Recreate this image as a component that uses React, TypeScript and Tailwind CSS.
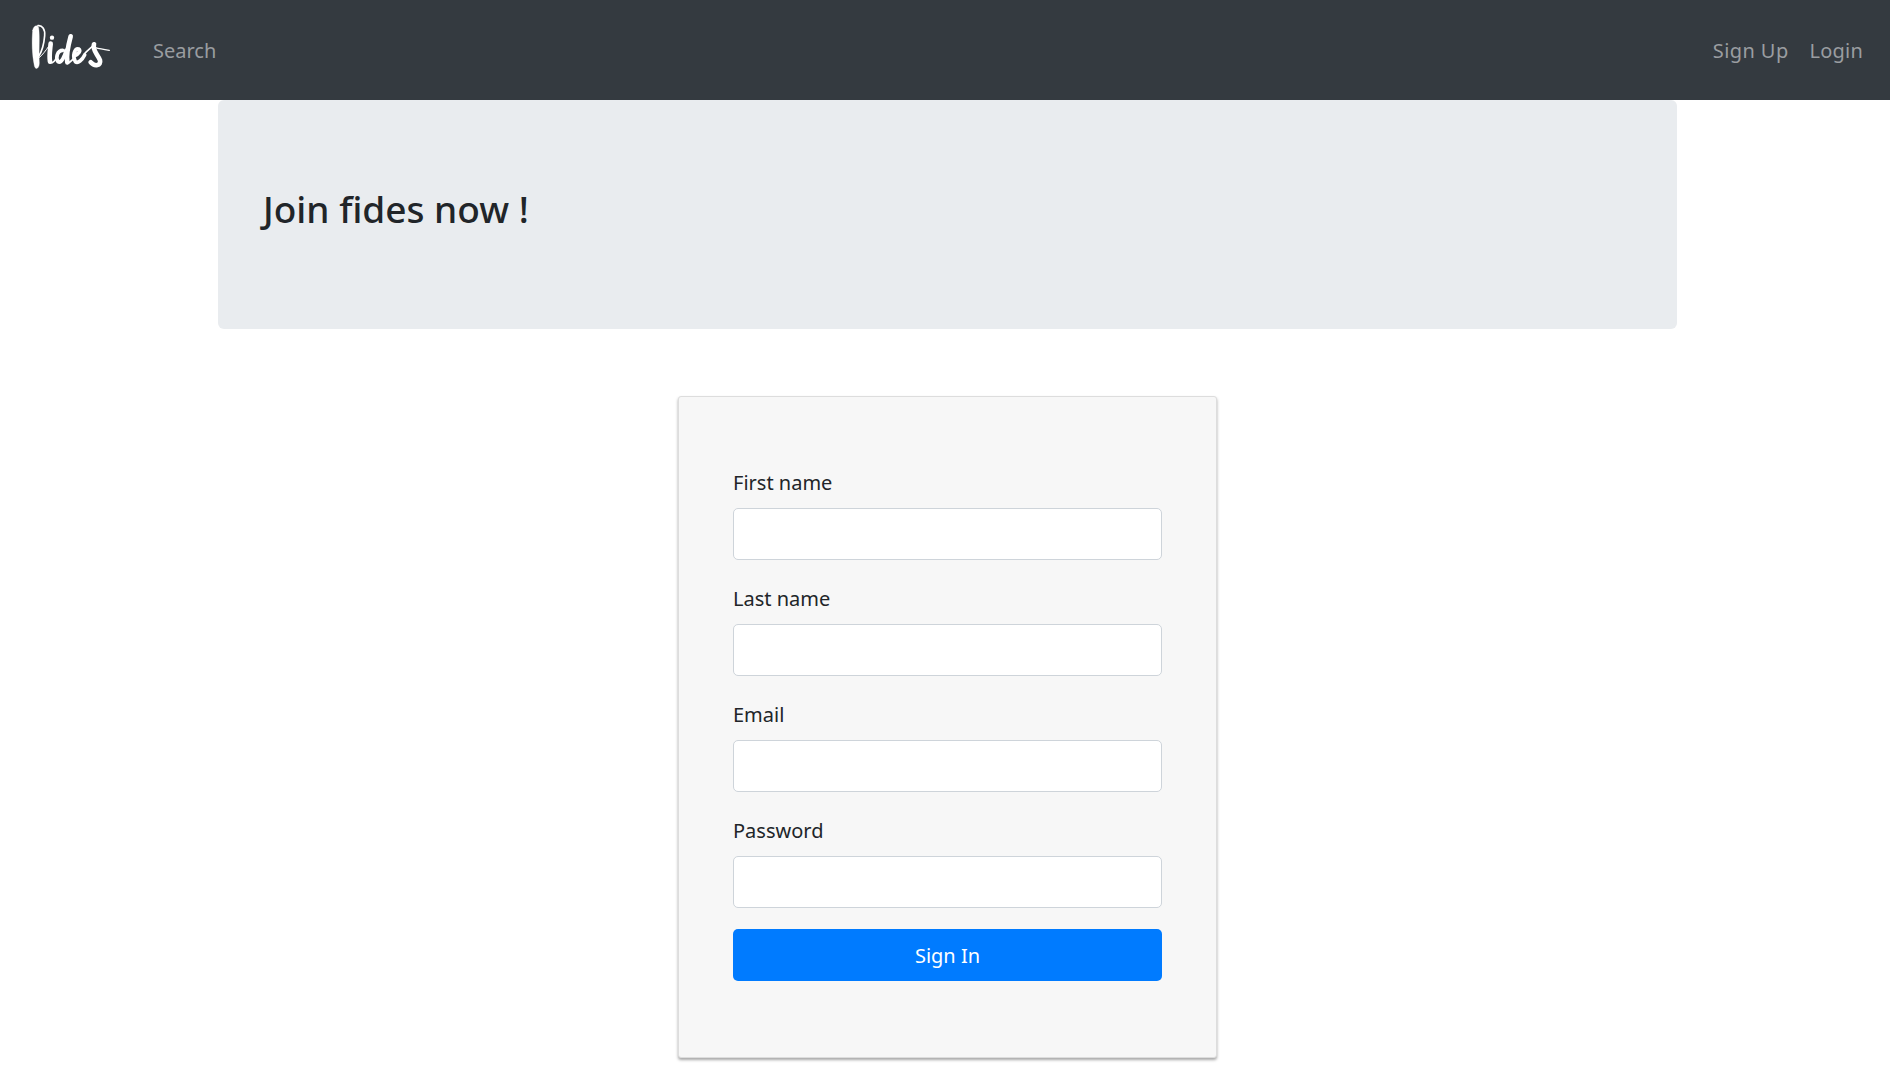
const font = { fontFamily: '"Noto Sans", sans-serif' };

function Logo() {
  return (
    <svg width="80" height="50" viewBox="30 30 240 150" fill="none" stroke="#fff" strokeLinecap="round" strokeLinejoin="round" className="block">
      <path d="M38 52 C40 36 54 34 56 44 C60 70 56 115 58 150 C58 168 46 172 43 158 C36 125 35 85 38 52 Z" fill="#fff" strokeWidth="1" />
      <path d="M54 38 C66 36 76 48 74 68 C72 92 68 112 56 130" strokeWidth="5" />
      <path d="M56 135 C66 128 78 112 86 100" strokeWidth="3" />
      <path d="M92 92 C90 112 87 130 90 146" strokeWidth="14" />
      <circle cx="96" cy="74" r="6.5" fill="#fff" stroke="none" />
      <path d="M92 150 C100 150 106 142 112 130" strokeWidth="5" />
      <path d="M128 112 C112 112 106 135 114 146 C124 152 134 130 138 112" strokeWidth="11" />
      <path d="M152 70 C146 92 138 125 142 148" strokeWidth="14" />
      <path d="M142 150 C150 150 156 142 162 135" strokeWidth="5" />
      <path d="M164 128 C176 124 184 112 176 108 C164 106 156 128 166 146 C174 152 186 142 194 126" strokeWidth="11" />
      <path d="M194 122 C206 108 222 98 224 92" strokeWidth="5" />
      <path d="M222 94 C216 112 234 125 240 142 C244 158 224 162 212 148" strokeWidth="14" />
      <path d="M226 104 C240 108 254 110 268 112" strokeWidth="3.5" />
    </svg>
  );
}

function Field({ label }: { label: string }) {
  return (
    <div className="mb-[23px]">
      <label className="block h-[41px] pt-[1px] text-[20px] leading-[30px] text-[#212529]">{label}</label>
      <input type="text" className="block w-full h-[52px] bg-white border border-[#ced4da] rounded-[5px]" />
    </div>
  );
}

export default function App() {
  return (
    <div className="w-full h-screen overflow-hidden bg-white" style={font}>
      <nav className="h-[100px] bg-[#343a40] flex items-center pl-[30px] pr-[27px]">
        <div className="w-[123px] h-[50px] -mt-[5px]">
          <Logo />
        </div>
        <a className="text-[20px] text-[#9a9da0] leading-[30px] mt-[2px]">Search</a>
        <div className="ml-auto flex gap-[21px] mt-[2px]">
          <a className="text-[20px] text-[#9a9da0] leading-[30px] tracking-[0.4px]">Sign Up</a>
          <a className="text-[20px] text-[#9a9da0] leading-[30px] tracking-[0.2px]">Login</a>
        </div>
      </nav>
      <main className="pl-[5px]">
        <section className="w-[1459px] h-[229px] mx-auto bg-[#e9ecef] rounded-[6px] pl-[45px] pt-[86px]">
          <h1 className="text-[37px] leading-[46px] font-medium text-[#212529]">Join fides now !</h1>
        </section>
        <form className="w-[539px] h-[662px] mx-auto mt-[67px] bg-[#f7f7f7] border border-[#dddddd] rounded-[3px] shadow-[0_2px_3px_rgba(0,0,0,0.35)] px-[54px] pt-[70px]">
          <Field label="First name" />
          <Field label="Last name" />
          <Field label="Email" />
          <Field label="Password" />
          <button type="button" className="block w-full h-[52px] -mt-[2px] pt-[1px] bg-[#007bff] text-white text-[20px] rounded-[5px]">Sign In</button>
        </form>
      </main>
    </div>
  );
}
